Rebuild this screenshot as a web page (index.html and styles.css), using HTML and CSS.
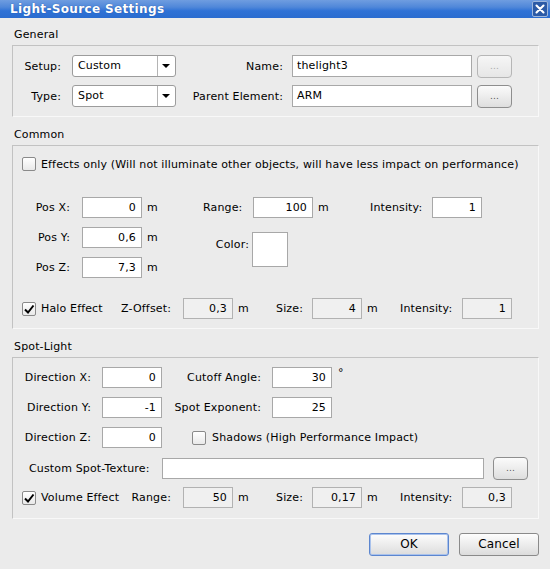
FILE: index.html
```html
<!DOCTYPE html>
<html lang="en">
<head>
    <meta charset="UTF-8">
    <title>Light-Source Settings</title>
    <link rel="stylesheet" href="styles.css">
</head>
<body>
    <div class="titlebar">
        <span class="title">Light-Source Settings</span>
        <span class="close">
            <svg width="16" height="16" viewBox="0 0 16 16">
                <path d="M4 4 L12 12 M12 4 L4 12" stroke="#fff" stroke-width="2.4" stroke-linecap="round"/>
            </svg>
        </span>
    </div>

    <div class="legend">General</div>
    <div class="group general">
        <span class="lbl">Setup:</span>
        <div class="combo"><span class="combo-text">Custom</span><span class="arrow"></span></div>
        <span class="lbl">Name:</span>
        <div class="field">thelight3</div>
        <div class="dots disabled">...</div>

        <span class="lbl">Type:</span>
        <div class="combo"><span class="combo-text">Spot</span><span class="arrow"></span></div>
        <span class="lbl">Parent Element:</span>
        <div class="field">ARM</div>
        <div class="dots">...</div>
    </div>

    <div class="legend">Common</div>
    <div class="group common">
        <div class="check-row">
            <span class="check"></span>
            <span>Effects only (Will not illuminate other objects, will have less impact on performance)</span>
        </div>

        <div class="pos-grid">
            <span class="lbl">Pos X:</span>
            <div class="num">0</div>
            <span class="unit">m</span>
            <span class="lbl">Range:</span>
            <div class="num">100</div>
            <span class="unit">m</span>
            <span class="lbl">Intensity:</span>
            <div class="num">1</div>

            <span class="lbl">Pos Y:</span>
            <div class="num">0,6</div>
            <span class="unit">m</span>
            <span class="lbl color-lbl">Color:</span>
            <div class="swatch"></div>

            <span class="lbl row3">Pos Z:</span>
            <div class="num row3">7,3</div>
            <span class="unit row3">m</span>
        </div>

        <div class="effect-row">
            <span class="check-label"><span class="check on"><svg width="12" height="12" viewBox="0 0 12 12"><path d="M2 6.5 L5 9.5 L10.5 2.5" fill="none" stroke="#000" stroke-width="2"/></svg></span>Halo Effect</span>
            <span class="lbl">Z-Offset:</span>
            <div class="num off">0,3</div>
            <span class="unit">m</span>
            <span>Size:</span>
            <div class="num off">4</div>
            <span class="unit">m</span>
            <span>Intensity:</span>
            <div class="num off">1</div>
        </div>
    </div>

    <div class="legend">Spot-Light</div>
    <div class="group spot">
        <div class="spot-grid">
            <span class="lbl">Direction X:</span>
            <div class="num">0</div>
            <span class="lbl">Cutoff Angle:</span>
            <div class="num">30</div>
            <span class="unit deg">°</span>

            <span class="lbl">Direction Y:</span>
            <div class="num">-1</div>
            <span class="lbl">Spot Exponent:</span>
            <div class="num">25</div>
            <span></span>

            <span class="lbl">Direction Z:</span>
            <div class="num">0</div>
            <span class="shadows"><span class="check"></span>Shadows (High Performance Impact)</span>
        </div>

        <div class="texture-row">
            <span class="lbl">Custom Spot-Texture:</span>
            <div class="field"></div>
            <div class="dots">...</div>
        </div>

        <div class="effect-row">
            <span class="check-label"><span class="check on"><svg width="12" height="12" viewBox="0 0 12 12"><path d="M2 6.5 L5 9.5 L10.5 2.5" fill="none" stroke="#000" stroke-width="2"/></svg></span>Volume Effect</span>
            <span class="lbl">Range:</span>
            <div class="num off">50</div>
            <span class="unit">m</span>
            <span>Size:</span>
            <div class="num off">0,17</div>
            <span class="unit">m</span>
            <span>Intensity:</span>
            <div class="num off">0,3</div>
        </div>
    </div>

    <div class="buttons">
        <div class="btn default">OK</div>
        <div class="btn">Cancel</div>
    </div>
</body>
</html>
```

FILE: styles.css
```css
* {
    margin: 0;
    padding: 0;
    box-sizing: border-box;
}
body {
    width: 550px;
    height: 569px;
    overflow: hidden;
    background: #ebebeb;
    font-family: "DejaVu Sans", "Liberation Sans", sans-serif;
    font-size: 11px;
    letter-spacing: 0.15px;
    color: #000;
}
.titlebar {
    height: 18px;
    display: flex;
    align-items: center;
    justify-content: space-between;
    padding: 0 2px 0 10px;
    background: linear-gradient(#6f9de0, #4f87d9 40%, #2f72d6 60%, #2a6ccf);
    margin-bottom: 10px;
}
.title {
    color: #fff;
    font-weight: bold;
    font-size: 12px;
    letter-spacing: 0.35px;
    text-shadow: 0 0 1px #1b4a99;
}
.close {
    width: 16px;
    height: 16px;
    border: 1px solid #9db6dc;
    border-radius: 2px;
    background: #2b5aa6;
    display: flex;
    align-items: center;
    justify-content: center;
}
.close svg {
    width: 14px;
    height: 14px;
}
.legend {
    height: 17px;
    line-height: 14px;
    padding-left: 14px;
}
.group {
    margin: 0 11px 11px 12px;
    border: 1px solid;
    border-color: #c2c2c2 #f8f8f8 #f8f8f8 #c2c2c2;
}
.lbl {
    text-align: right;
    white-space: nowrap;
}
.unit {
    padding-left: 5px;
}

/* inputs */
.field, .num, .combo, .swatch {
    background: #fff;
    border: 1px solid #a8a8a8;
}
.field {
    height: 22px;
    line-height: 20px;
    padding-left: 4px;
}
.num {
    height: 21px;
    line-height: 19px;
    text-align: right;
    padding-right: 5px;
}
.num.off {
    background: #f0f0f0;
    border-color: #b2b2b2;
}
.combo {
    height: 22px;
    border-color: #9c9c9c;
    border-radius: 3px;
    display: flex;
}
.combo-text {
    flex: 1;
    line-height: 20px;
    padding-left: 5px;
}
.arrow {
    width: 18px;
    border-left: 1px solid #b4b4b4;
    position: relative;
}
.arrow::after {
    content: "";
    position: absolute;
    left: 4px;
    top: 8px;
    border-left: 4px solid transparent;
    border-right: 4px solid transparent;
    border-top: 4px solid #000;
}
.dots {
    width: 35px;
    height: 23px;
    line-height: 20px;
    text-align: center;
    margin-left: 5px;
    border: 1px solid #8e8e8e;
    border-radius: 4px;
    background: linear-gradient(#fbfbfb, #dedede);
    color: #555;
    font-size: 9px;
}
.dots.disabled {
    border-color: #b6b6b6;
    background: linear-gradient(#f6f6f6, #e6e6e6);
    color: #aaa;
}
.check {
    width: 14px;
    height: 14px;
    border: 1px solid #8a8a8a;
    border-radius: 2px;
    background: linear-gradient(#fff, #e9e9e9);
    display: inline-flex;
    align-items: center;
    justify-content: center;
    flex: none;
}

/* general */
.general {
    display: grid;
    grid-template-columns: 59px 104px 116px 180px 40px;
    grid-template-rows: 22px 22px;
    row-gap: 8px;
    align-items: center;
    padding: 9px 0 9px;
}
.general .lbl {
    padding-right: 9px;
}
.general .lbl:first-child,
.general .lbl:nth-child(6) {
    padding-right: 11px;
}

/* common */
.common {
    padding: 11px 0 9px;
}
.check-row {
    display: flex;
    align-items: center;
    gap: 5px;
    padding-left: 9px;
    height: 14px;
}
.pos-grid {
    margin-top: 26px;
    display: grid;
    grid-template-columns: 69px 60px 61px 50px 60px 57px 62px 50px;
    grid-template-rows: 21px 21px 21px;
    row-gap: 9px;
    align-items: center;
}
.pos-grid .lbl {
    padding-right: 12px;
}
.pos-grid .lbl:nth-child(7) {
    text-align: left;
    padding-right: 0;
}
.pos-grid .row3 {
    grid-row: 3;
}
.color-lbl {
    grid-column: 4;
    grid-row: 2 / 4;
    align-self: start;
    margin-top: 11px;
    margin-right: -4px;
    padding-right: 8px !important;
}
.swatch {
    grid-column: 5;
    grid-row: 2 / 4;
    align-self: start;
    margin-top: 5px;
    width: 36px;
    height: 35px;
    margin-left: -1px;
}
.effect-row {
    margin-top: 20px;
    display: grid;
    grid-template-columns: 96px 65px 50px 43px 36px 50px 38px 62px 50px;
    height: 21px;
    align-items: center;
    padding-left: 9px;
}
.effect-row > div {
    height: 21px;
}
.effect-row .lbl {
    padding-right: 12px;
}
.check-label {
    display: flex;
    align-items: center;
    gap: 5px;
    white-space: nowrap;
}

/* spot-light */
.spot {
    padding: 9px 0 10px;
}
.spot-grid {
    display: grid;
    grid-template-columns: 89px 60px 110px 60px 20px;
    grid-template-rows: 21px 21px 21px;
    row-gap: 9px;
    align-items: center;
}
.spot-grid .lbl {
    padding-right: 11px;
}
.deg {
    padding-left: 6px;
    align-self: start;
    line-height: 12px;
}
.shadows {
    grid-column: 3 / 6;
    display: flex;
    align-items: center;
    gap: 6px;
    padding-left: 30px;
    white-space: nowrap;
}
.texture-row {
    margin-top: 9px;
    display: flex;
    align-items: center;
    padding-left: 16px;
    height: 22px;
}
.texture-row .lbl {
    width: 133px;
    text-align: left;
}
.texture-row .field {
    width: 322px;
    height: 21px;
}
.texture-row .dots {
    margin-left: 9px;
}
.spot .effect-row {
    margin-top: 8px;
}

/* buttons */
.buttons {
    display: flex;
    justify-content: flex-end;
    gap: 10px;
    margin: 14px 11px 0 0;
}
.btn {
    width: 80px;
    height: 23px;
    line-height: 21px;
    text-align: center;
    border: 1px solid #8a8a8a;
    border-radius: 3px;
    background: linear-gradient(#fdfdfd, #dcdcdc);
    font-size: 12px;
}
.btn.default {
    border-color: #5c86cf;
    box-shadow: inset 0 0 0 1px #a9c2ec;
}
```
